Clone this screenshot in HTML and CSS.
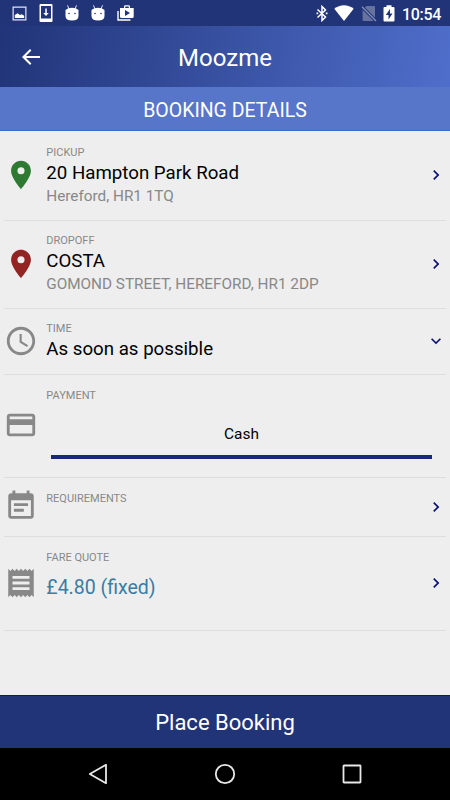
FILE: index.html
```html
<!DOCTYPE html>
<html lang="en">
<head>
  <meta charset="UTF-8">
  <meta name="viewport" content="width=device-width, initial-scale=1.0">
  <title>Moozme - Booking Details</title>
  <link rel="stylesheet" href="styles.css">
</head>
<body>

  <div class="status">
    <div class="status-left">
      <svg width="15" height="15" viewBox="0 0 16 16"><path fill="none" stroke="#dfe4f5" stroke-width="1.3" d="M1.2 1.2h13.600v13.600H1.200z"/><path fill="#fff" d="M3 12.800V9.500l3-1.800 2.500 1.800 2-.8 2.500 1.600v2.500z"/></svg>
      <svg width="14" height="18" viewBox="0 0 14 18"><path fill="#fff" fill-rule="evenodd" d="M1.500 0h11Q13.500 0 13.500 1v16q0 1-1 1h-11q-1 0-1-1V1q0-1 1-1zM2 2v12.500h10V2z"/><path fill="#fff" d="M6.300 4.500h1.500V9h2L7 12 4.200 9h2.100z"/></svg>
      <svg width="14" height="16" viewBox="0 0 14 16"><path fill="none" stroke="#dfe4f5" stroke-width="1" d="M2.500.3l1.400 3.500M11.500.3l-1.400 3.500"/><path fill="#fff" d="M.5 5Q3 2.800 7 2.800T13.500 5v6q0 4.500-6.500 4.500T.5 11z"/><circle cx="4" cy="8.500" r=".8" fill="#213478"/><circle cx="10" cy="8.500" r=".8" fill="#213478"/></svg>
      <svg width="14" height="16" viewBox="0 0 14 16"><path fill="none" stroke="#dfe4f5" stroke-width="1" d="M2.500.3l1.400 3.500M11.500.3l-1.400 3.500"/><path fill="#fff" d="M.5 5Q3 2.800 7 2.800T13.500 5v6q0 4.500-6.500 4.500T.5 11z"/><circle cx="4" cy="8.500" r=".8" fill="#213478"/><circle cx="10" cy="8.500" r=".8" fill="#213478"/></svg>
      <svg width="17" height="16" viewBox="0 0 17 16"><path fill="none" stroke="#fff" stroke-width="1.400" d="M1 6v9h12.500"/><path fill="#fff" fill-rule="evenodd" d="M3 3h4V1.500Q7 .3 8.200.3h3.600Q13 .3 13 1.500V3h3.700v8.500q0 1.500-1.500 1.500H4.500Q3 13 3 11.500zM8.200 1.600V3h3.600V1.600zM8 5v6l5-3z"/></svg>
    </div>
    <div class="status-right">
      <svg width="12" height="17" viewBox="0 0 12 17"><path fill="none" stroke="#fff" stroke-width="1.500" d="M1.500 4.500l8 7.500L6 15.500v-14L9.500 5l-8 7.500"/><path fill="#fff" d="M.5 7.500h1.700v1.700H.5zM9.800 7.500h1.700v1.700H9.800z"/></svg>
      <svg width="20" height="16" viewBox="0 0 20 16"><path fill="#fff" d="M10 16L.3 3.800Q4.500.3 10 .3t9.700 3.500z"/></svg>
      <svg width="16" height="17" viewBox="0 0 16 17"><path fill="#66739f" d="M5.500 1H13q1 0 1 1v10.800L4 2.600zM1.600 4.700L12.600 16H2.600q-1 0-1-1z"/><path stroke="#8390b9" stroke-width="1.300" d="M1 1.800l14 14.200"/></svg>
      <svg width="12" height="17" viewBox="0 0 12 17"><path fill="#fff" fill-rule="evenodd" d="M3.500 2V.3h5V2h2q1 0 1 1v12.500q0 1-1 1h-9q-1 0-1-1V3q0-1 1-1zM7 4L2.800 10h2.700v4.500l4-6H7z"/></svg>
      <span class="clock">10:54</span>
    </div>
  </div>

  <header class="topbar">
    <svg class="back" width="24" height="24" viewBox="0 0 24 24"><path fill="#fff" d="M21 11H7L12.400 5.400 11 4 3 12l8 8 1.400-1.400L7 13h14v-2z"/></svg>
    <h1>Moozme</h1>
  </header>
  <h2 class="subtitle">BOOKING DETAILS</h2>

  <main class="list">
    <div class="row pickup">
      <svg class="icon" viewBox="0 0 24 24"><path fill="#2f7a33" d="M12 2C8.130 2 5 5.130 5 9c0 5.250 7 13 7 13s7-7.750 7-13c0-3.870-3.130-7-7-7zm0 9.500a2.500 2.500 0 0 1 0-5 2.500 2.500 0 0 1 0 5z"/></svg>
      <div class="text">
        <div class="label">PICKUP</div>
        <div class="title">20 Hampton Park Road</div>
        <div class="sub">Hereford, HR1 1TQ</div>
      </div>
      <svg class="chevron" viewBox="0 0 24 24"><path d="M10 6L8.590 7.410 13.170 12l-4.580 4.590L10 18l6-6z"/></svg>
    </div>

    <div class="row dropoff">
      <svg class="icon" viewBox="0 0 24 24"><path fill="#922424" d="M12 2C8.130 2 5 5.130 5 9c0 5.250 7 13 7 13s7-7.750 7-13c0-3.870-3.130-7-7-7zm0 9.500a2.500 2.500 0 0 1 0-5 2.500 2.500 0 0 1 0 5z"/></svg>
      <div class="text">
        <div class="label">DROPOFF</div>
        <div class="title">COSTA</div>
        <div class="sub">GOMOND STREET, HEREFORD, HR1 2DP</div>
      </div>
      <svg class="chevron" viewBox="0 0 24 24"><path d="M10 6L8.590 7.410 13.170 12l-4.580 4.590L10 18l6-6z"/></svg>
    </div>

    <div class="row time">
      <svg class="icon" viewBox="0 0 24 24"><path d="M11.990 2C6.470 2 2 6.480 2 12s4.470 10 9.990 10C17.520 22 22 17.520 22 12S17.520 2 11.990 2zM12 20c-4.420 0-8-3.580-8-8s3.580-8 8-8 8 3.580 8 8-3.580 8-8 8z"/><path d="M12.500 7H11v6l5.250 3.150.75-1.230-4.500-2.670z"/></svg>
      <div class="text">
        <div class="label">TIME</div>
        <div class="title">As soon as possible</div>
      </div>
      <svg class="chevron" viewBox="0 0 24 24"><path d="M16.590 8.590L12 13.170 7.410 8.590 6 10l6 6 6-6z"/></svg>
    </div>

    <div class="row payment">
      <svg class="icon" viewBox="0 0 24 24"><path d="M20 4H4c-1.110 0-1.990.89-1.990 2L2 18c0 1.110.89 2 2 2h16c1.110 0 2-.89 2-2V6c0-1.110-.89-2-2-2zm0 14H4v-6h16v6zm0-10H4V6h16v2z"/></svg>
      <div class="text">
        <div class="label">PAYMENT</div>
        <div class="tab">Cash</div>
      </div>
    </div>

    <div class="row requirements">
      <svg class="icon" viewBox="0 0 24 24"><path d="M17 10H7v2h10v-2zm2-7h-1V1h-2v2H8V1H6v2H5c-1.110 0-1.990.9-1.990 2L3 19c0 1.100.89 2 2 2h14c1.100 0 2-.9 2-2V5c0-1.100-.9-2-2-2zm0 16H5V8h14v11zm-5-5H7v2h7v-2z"/></svg>
      <div class="text">
        <div class="label">REQUIREMENTS</div>
      </div>
      <svg class="chevron" viewBox="0 0 24 24"><path d="M10 6L8.590 7.410 13.170 12l-4.580 4.590L10 18l6-6z"/></svg>
    </div>

    <div class="row fare">
      <svg class="icon" viewBox="0 0 24 24"><path d="M18 17H6v-2h12v2zm0-4H6v-2h12v2zm0-4H6V7h12v2zM3 22l1.500-1.500L6 22l1.500-1.500L9 22l1.500-1.500L12 22l1.500-1.500L15 22l1.500-1.500L18 22l1.500-1.500L21 22V2l-1.500 1.500L18 2l-1.500 1.500L15 2l-1.500 1.500L12 2l-1.500 1.500L9 2 7.500 3.500 6 2 4.500 3.500 3 2v20z"/></svg>
      <div class="text">
        <div class="label">FARE QUOTE</div>
        <div class="price">£4.80 (fixed)</div>
      </div>
      <svg class="chevron" viewBox="0 0 24 24"><path d="M10 6L8.590 7.410 13.170 12l-4.580 4.590L10 18l6-6z"/></svg>
    </div>
  </main>

  <button class="place">Place Booking</button>

  <nav class="navbar">
    <svg width="22" height="22" viewBox="0 0 22 22"><path d="M19 1.800v18.400L2.800 11z"/></svg>
    <svg width="22" height="22" viewBox="0 0 22 22"><circle cx="11" cy="11" r="9.200"/></svg>
    <svg width="22" height="22" viewBox="0 0 22 22"><rect x="2.500" y="2.500" width="17" height="17" rx=".5"/></svg>
  </nav>

</body>
</html>
```
FILE: styles.css
```css
* {
  box-sizing: border-box;
}

body {
  margin: 0;
  height: 800px;
  display: flex;
  flex-direction: column;
  font-family: Roboto, "Noto Sans", sans-serif;
  background-color: #eeeeee;
  overflow: hidden;
}

svg {
  display: block;
  flex-shrink: 0;
}

.status {
  height: 26px;
  background-color: #213478;
  display: flex;
  justify-content: space-between;
  align-items: center;
  padding: 0 9px 0 12px;
  color: white;
}

.status-left {
  display: flex;
  align-items: center;
  gap: 12px;
}

.status-right {
  display: flex;
  align-items: center;
  gap: 6.5px;
}

.clock {
  font-size: 16px;
  font-weight: 500;
  line-height: 26px;
  padding-top: 3px;
  letter-spacing: -0.3px;
}

.topbar {
  height: 61px;
  background: linear-gradient(100deg, #213478, #4f6ecb);
  display: grid;
  grid-template-columns: 50px 1fr 50px;
  align-items: center;
  color: white;
}

.back {
  margin-left: 19px;
}

h1 {
  grid-column: 2;
  margin: 0;
  padding-top: 3px;
  font-size: 24px;
  font-weight: 400;
  text-align: center;
}

.subtitle {
  margin: 0;
  height: 44px;
  line-height: 48px;
  border-bottom: 1px solid #3f68cd;
  background-color: #5776c9;
  color: white;
  font-size: 19.5px;
  font-weight: 400;
  text-align: center;
}

.list {
  flex: 1;
  padding: 0 4px;
}

.row {
  display: flex;
  align-items: center;
  border-bottom: 1px solid #dddddd;
}

.icon {
  width: 34px;
  height: 34px;
  margin-bottom: 2px;
  fill: #888888;
}

.text {
  flex: 1;
  align-self: flex-start;
  padding: 13px 0 0 8.3px;
}

.label {
  font-size: 11px;
  line-height: 15px;
  color: #888888;
}

.title {
  font-size: 18.7px;
  line-height: 26px;
  color: black;
}

.sub {
  font-size: 15.3px;
  line-height: 20px;
  color: #888888;
}

.chevron {
  width: 20px;
  height: 20px;
  margin: 0 0.5px 1px 0;
  fill: #0c1072;
}

.pickup {
  height: 90px;
  padding-top: 2px;
}

.pickup .icon,
.pickup .chevron {
  margin-bottom: 3px;
}

.dropoff {
  height: 88px;
}

.dropoff .icon,
.dropoff .chevron {
  margin-bottom: 2px;
}

.pickup .text,
.dropoff .text,
.time .text {
  padding-top: 12px;
}

.time {
  height: 66px;
}

.payment {
  height: 103px;
}

.requirements {
  height: 59px;
}

.fare {
  height: 94px;
}

.tab {
  margin: 13px 14px 0 4.7px;
  height: 43px;
  line-height: 36px;
  border-bottom: 4px solid #1a2878;
  font-size: 15.4px;
  text-align: center;
}

.price {
  padding-top: 9px;
  font-size: 19.5px;
  line-height: 28px;
  color: #3a7ca5;
}

.place {
  height: 53px;
  padding: 0;
  border: none;
  border-top: 1px solid #0c1a66;
  background-color: #213478;
  color: white;
  font-family: inherit;
  font-size: 22px;
}

.navbar {
  height: 52px;
  background-color: black;
  display: flex;
  justify-content: space-between;
  align-items: center;
  padding: 0 87.5px 0 87px;
}

.navbar svg {
  fill: none;
  stroke: #e8e8e8;
  stroke-width: 1.8;
  stroke-linejoin: round;
}
```
